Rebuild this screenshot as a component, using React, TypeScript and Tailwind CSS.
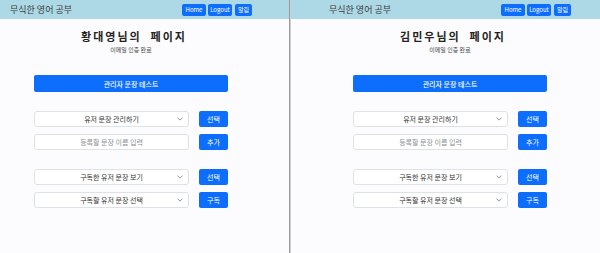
import React from 'react';

const font = { fontFamily: '"Noto Sans CJK KR", "Noto Sans", sans-serif' };

const Chevron: React.FC = () => (
    <svg className="w-[6px] h-[6px] text-gray-500" viewBox="0 0 16 16" fill="none" stroke="currentColor" strokeWidth={2}>
        <path d="M2 5l6 6 6-6" strokeLinecap="round" strokeLinejoin="round" />
    </svg>
);

const SelectRow: React.FC<{ label: string; action: string }> = ({ label, action }) => (
    <div className="flex items-center justify-between">
        <div className="relative flex items-center justify-center w-[155px] h-[16px] bg-white border border-[#dee2e6] rounded-[3px] text-[7px] leading-[10px] text-[#333]">
            <span>{label}</span>
            <span className="absolute right-[5px] top-[4px]"><Chevron /></span>
        </div>
        <button className="w-[29px] h-[16px] bg-[#0d6efd] rounded-[2px] text-white text-[7px] leading-[10px]">{action}</button>
    </div>
);

const InputRow: React.FC<{ placeholder: string; action: string }> = ({ placeholder, action }) => (
    <div className="flex items-center justify-between">
        <div className="flex items-center justify-center w-[155px] h-[16px] bg-white border border-[#dee2e6] rounded-[3px] text-[7px] leading-[10px] text-[#8a8f96]">
            {placeholder}
        </div>
        <button className="w-[29px] h-[16px] bg-[#0d6efd] rounded-[2px] text-white text-[7px] leading-[10px]">{action}</button>
    </div>
);

const Panel: React.FC<{ name: string; shift: string; width: string }> = ({ name, shift, width }) => (
    <div className={`${width} h-full bg-[#fcfcfe] flex flex-col`}>
        <header className="h-[19px] bg-[#add8e6] shrink-0">
            <div className={`${shift} w-[262px] h-full px-[10px] flex items-center justify-between`}>
                <span className="text-[9px] leading-[12px] text-[#3a3a3a]">무식한 영어 공부</span>
                <div className="flex gap-[2px] pt-[1px]">
                    <button className="h-[12px] w-[24px] bg-[#0d6efd] rounded-[2px] text-white text-[6px] leading-[8px]">Home</button>
                    <button className="h-[12px] w-[24px] bg-[#0d6efd] rounded-[2px] text-white text-[6px] leading-[8px]">Logout</button>
                    <button className="h-[12px] w-[17px] bg-[#0d6efd] rounded-[2px] text-white text-[6px] leading-[8px] ml-[1px]">알림</button>
                </div>
            </div>
        </header>
        <main className={`${shift} w-[262px] flex flex-col items-center text-[7px] leading-[10px]`}>
            <h1 className="mt-[10px] text-[11px] leading-[15px] font-bold tracking-[2px] text-[#222] pl-[6px]">{name}님의&nbsp; 페이지</h1>
            <p className="mt-[2px] text-[6px] leading-[8px] text-[#444]">이메일 인증 완료</p>
            <div className="w-[194px] mt-[21px]">
                <button className="w-full h-[17px] bg-[#0d6efd] rounded-[2px] text-white text-[7px] leading-[10px] font-medium">관리자 문장 테스트</button>
                <div className="mt-[19px] flex flex-col gap-[7px]">
                    <SelectRow label="유저 문장 관리하기" action="선택" />
                    <InputRow placeholder="등록할 문장 이름 입력" action="추가" />
                </div>
                <div className="mt-[19px] flex flex-col gap-[7px]">
                    <SelectRow label="구독한 유저 문장 보기" action="선택" />
                    <SelectRow label="구독할 유저 문장 선택" action="구독" />
                </div>
            </div>
        </main>
    </div>
);

const App: React.FC = () => (
    <div className="w-[600px] h-[253px] flex overflow-hidden" style={font}>
        <Panel name="황대영" shift="ml-0" width="w-[289px]" />
        <div className="w-[2px] h-full bg-[#9a9a9a] border-r border-[#d0d0d0]" />
        <Panel name="김민우" shift="ml-[28px]" width="w-[309px]" />
    </div>
);

export default App;
